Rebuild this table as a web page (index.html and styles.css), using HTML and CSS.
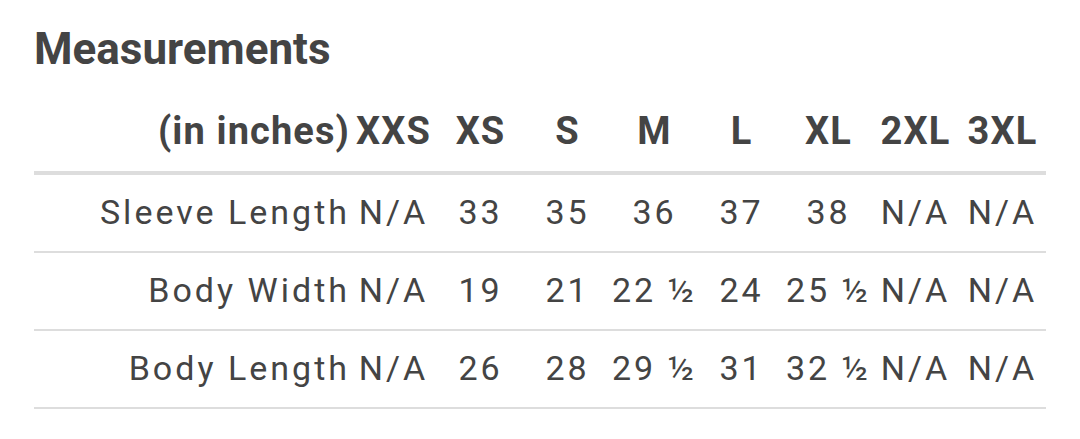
FILE: index.html
```html
<!DOCTYPE html>
<html>
<head>
<meta charset="utf-8">
<link rel="stylesheet" href="styles.css">
</head>
<body>
<section class="measure">
  <h1 class="title">Measurements</h1>
  <div class="table">
    <div class="row head">
      <div class="cell label">(in inches)</div>
      <div class="cell">XXS</div>
      <div class="cell">XS</div>
      <div class="cell">S</div>
      <div class="cell">M</div>
      <div class="cell">L</div>
      <div class="cell">XL</div>
      <div class="cell">2XL</div>
      <div class="cell">3XL</div>
    </div>
    <div class="row">
      <div class="cell label">Sleeve Length</div>
      <div class="cell">N/A</div>
      <div class="cell">33</div>
      <div class="cell">35</div>
      <div class="cell">36</div>
      <div class="cell">37</div>
      <div class="cell">38</div>
      <div class="cell">N/A</div>
      <div class="cell">N/A</div>
    </div>
    <div class="row">
      <div class="cell label">Body Width</div>
      <div class="cell">N/A</div>
      <div class="cell">19</div>
      <div class="cell">21</div>
      <div class="cell">22 ½</div>
      <div class="cell">24</div>
      <div class="cell">25 ½</div>
      <div class="cell">N/A</div>
      <div class="cell">N/A</div>
    </div>
    <div class="row">
      <div class="cell label">Body Length</div>
      <div class="cell">N/A</div>
      <div class="cell">26</div>
      <div class="cell">28</div>
      <div class="cell">29 ½</div>
      <div class="cell">31</div>
      <div class="cell">32 ½</div>
      <div class="cell">N/A</div>
      <div class="cell">N/A</div>
    </div>
  </div>
</section>
</body>
</html>
```
FILE: styles.css
```css
html, body {
  margin: 0;
  padding: 0;
  background: #ffffff;
}
body {
  font-family: Roboto, "Liberation Sans", sans-serif;
  color: #444444;
}
.measure {
  padding: 21px 34px 0 34px;
}
.title {
  margin: 0;
  font-size: 44px;
  line-height: 56px;
  font-weight: 700;
  color: #444444;
}
.table {
  width: 1012px;
  margin-top: 18px;
}
.row {
  display: grid;
  grid-template-columns: 316px repeat(8, 87px);
  height: 74px;
  padding-bottom: 2px;
  align-items: center;
  border-bottom: 2px solid #dddddd;
  font-size: 34px;
  letter-spacing: 3px;
}
.row.head {
  height: 72px;
  padding-bottom: 4px;
  border-bottom: 4px solid #dddddd;
  font-size: 38px;
  font-weight: 700;
  letter-spacing: 1.1px;
}
.cell {
  text-align: center;
  white-space: nowrap;
}
.cell.label {
  text-align: right;
  padding-right: 0;
}
```
